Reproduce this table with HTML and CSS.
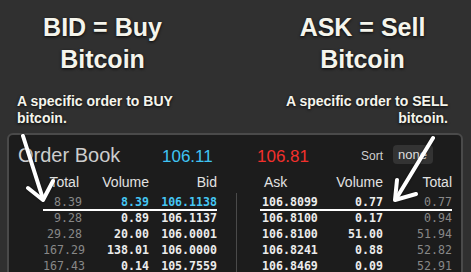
FILE: index.html
```html
<!DOCTYPE html>
<html>
<head>
<meta charset="utf-8">
<link rel="stylesheet" href="styles.css">
</head>
<body>
<div class="page">
  <section class="notes">
    <div class="note note-bid">
      <h1>BID = Buy<br>Bitcoin</h1>
      <p>A specific order to BUY<br>bitcoin.</p>
    </div>
    <div class="note note-ask">
      <h1>ASK = Sell<br>Bitcoin</h1>
      <p>A specific order to SELL<br>bitcoin.</p>
    </div>
  </section>

  <section class="book">
    <div class="book-head">
      <span class="title">Order Book</span>
      <span class="price price-bid">106.11</span>
      <span class="price price-ask">106.81</span>
      <span class="sort">Sort</span>
      <span class="select">none</span>
    </div>
    <div class="tables">
      <div class="thead bids"><span>Total</span><span>Volume</span><span>Bid</span></div>
      <div></div>
      <div class="thead asks"><span>Ask</span><span>Volume</span><span>Total</span></div>

      <div class="tbody bids">
        <div class="row first hl"><span class="tot">8.39</span><span>8.39</span><span>106.1138</span></div>
        <div class="row"><span class="tot">9.28</span><span>0.89</span><span>106.1137</span></div>
        <div class="row"><span class="tot">29.28</span><span>20.00</span><span>106.0001</span></div>
        <div class="row"><span class="tot">167.29</span><span>138.01</span><span>106.0000</span></div>
        <div class="row"><span class="tot">167.43</span><span>0.14</span><span>105.7559</span></div>
      </div>
      <div class="divider"></div>
      <div class="tbody asks">
        <div class="row first"><span>106.8099</span><span>0.77</span><span class="tot">0.77</span></div>
        <div class="row"><span>106.8100</span><span>0.17</span><span class="tot">0.94</span></div>
        <div class="row"><span>106.8100</span><span>51.00</span><span class="tot">51.94</span></div>
        <div class="row"><span>106.8241</span><span>0.88</span><span class="tot">52.82</span></div>
        <div class="row"><span>106.8469</span><span>0.09</span><span class="tot">52.91</span></div>
      </div>
    </div>
  </section>

  <svg class="arrows" width="471" height="272" viewBox="0 0 471 272">
    <g fill="none" stroke="#ffffff" stroke-width="4" stroke-linecap="round" stroke-linejoin="round">
      <path d="M23 136 L43 199"/>
      <path d="M28 188 L43 200 L53 181"/>
      <path d="M433 138 L396 199"/>
      <path d="M397 180 L395 200 L416 194"/>
    </g>
  </svg>
</div>
</body>
</html>
```

FILE: styles.css
```css
html, body {
  margin: 0;
  padding: 0;
  background: #303030;
}

.page {
  position: relative;
  width: 471px;
  height: 272px;
  overflow: hidden;
  background: #303030;
  font-family: "Liberation Sans", Arial, sans-serif;
}

/* annotations */
.notes {
  display: flex;
  justify-content: space-between;
  padding: 11px 23px 0 17px;
}

.note {
  width: 171px;
  color: #f5f5ec;
  text-shadow: 0 1px 3px rgba(0, 0, 0, 0.85);
}

.note h1 {
  margin: 0;
  font-size: 25px;
  line-height: 32px;
  font-weight: bold;
  text-align: center;
}

.note p {
  margin: 18px 0 0;
  font-size: 14px;
  line-height: 17px;
  font-weight: bold;
  white-space: nowrap;
}

.note-ask p {
  text-align: right;
}

/* order book panel */
.book {
  margin: 6px 0 0 7px;
  width: 452px;
  height: 160px;
  border: 2px solid #4a4a4a;
  border-radius: 6px;
  background: #1c1c1c;
}

.book-head {
  display: grid;
  grid-template-columns: 144px 95px 104px 32px 40px;
  align-items: baseline;
  padding: 8px 0 0 9px;
  line-height: 24px;
}

.title {
  font-size: 20px;
  color: #cdcdcd;
}

.price {
  font-size: 17px;
}

.price-bid {
  color: #3fc4f3;
}

.price-ask {
  color: #f2302c;
}

.sort {
  font-size: 12px;
  color: #cfcfcf;
  align-self: center;
}

.select {
  align-self: center;
  height: 19px;
  margin-top: -3px;
  line-height: 19px;
  padding-left: 5px;
  border-radius: 4px;
  background: #333333;
  color: #dddddd;
  font-size: 13px;
  overflow: hidden;
}

.tables {
  display: grid;
  grid-template-columns: 174px 43px 192px;
  padding-left: 34px;
  margin-top: 4px;
}

.thead {
  display: grid;
  font-size: 14px;
  line-height: 18px;
  color: #e2e2e2;
}

.thead span,
.row span {
  text-align: right;
}

.bids {
  grid-template-columns: 39px 67px 68px;
}

.asks {
  grid-template-columns: 70px 53px 69px;
}

.thead.bids span:first-child {
  padding-right: 3px;
}

.thead.asks span:first-child {
  text-align: left;
  padding-left: 4px;
}

.tbody {
  display: block;
  padding-top: 3px;
  font-family: "DejaVu Sans Mono", "Liberation Mono", monospace;
  font-size: 11.6px;
  line-height: 16px;
  font-weight: bold;
  color: #ececec;
}

.row {
  position: relative;
  display: grid;
}

.tbody.bids .row {
  grid-template-columns: 39px 67px 68px;
}

.tbody.asks .row {
  grid-template-columns: 70px 53px 69px;
}

.tbody.asks .row span:first-child {
  text-align: left;
  padding-left: 2px;
}

.row .tot {
  font-weight: normal;
  color: #888888;
}

.row.hl span:not(.tot) {
  color: #44c6f4;
}

.row.first::after {
  content: "";
  position: absolute;
  left: 0;
  right: 0;
  bottom: -1px;
  height: 2px;
  background: #ffffff;
}

.divider {
  width: 1px;
  margin-left: 19px;
  margin-top: 2px;
  background: #4a4a4a;
}

.arrows {
  position: absolute;
  left: 0;
  top: 0;
  filter: drop-shadow(0 0 1px rgba(0, 0, 0, 0.6));
}
```
